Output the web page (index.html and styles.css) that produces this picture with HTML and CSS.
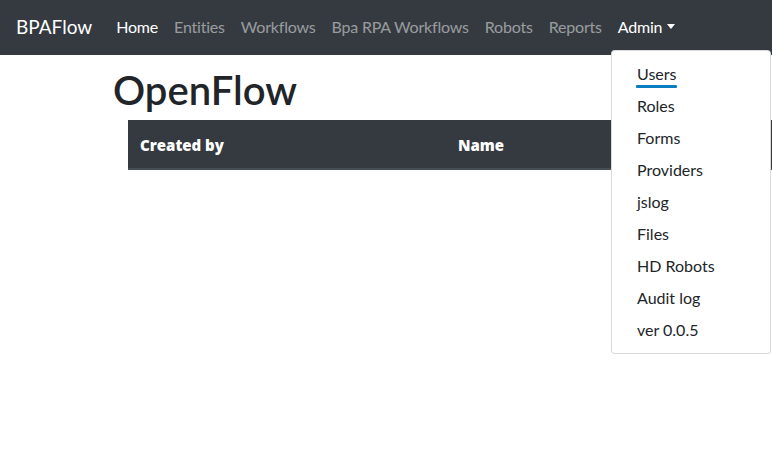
FILE: index.html
```html
<!DOCTYPE html>
<html>
<head>
<meta charset="utf-8">
<link rel="stylesheet" href="styles.css">
</head>
<body>
<nav class="navbar">
  <a class="brand">BPAFlow</a>
  <ul class="nav">
    <li><a class="nav-link active">Home</a></li>
    <li><a class="nav-link">Entities</a></li>
    <li><a class="nav-link">Workflows</a></li>
    <li><a class="nav-link">Bpa RPA Workflows</a></li>
    <li><a class="nav-link">Robots</a></li>
    <li><a class="nav-link">Reports</a></li>
    <li><a class="nav-link active dropdown-toggle">Admin</a></li>
  </ul>
</nav>
<div class="dropdown-menu">
  <a class="dropdown-item"><span class="focused">Users</span></a>
  <a class="dropdown-item">Roles</a>
  <a class="dropdown-item">Forms</a>
  <a class="dropdown-item">Providers</a>
  <a class="dropdown-item">jslog</a>
  <a class="dropdown-item">Files</a>
  <a class="dropdown-item">HD Robots</a>
  <a class="dropdown-item">Audit log</a>
  <a class="dropdown-item">ver 0.0.5</a>
</div>
<main class="content">
  <h1 class="title">OpenFlow</h1>
  <table class="table">
    <thead>
      <tr><th class="col-created">Created by</th><th>Name</th></tr>
    </thead>
  </table>
</main>
</body>
</html>
```
FILE: styles.css
```css
html, body {
  margin: 0;
  padding: 0;
  overflow: hidden;
  height: 100%;
}
body {
  font-family: Lato, "Open Sans", sans-serif;
  font-size: 16px;
  line-height: 24px;
  color: #212529;
  background: #fff;
  position: relative;
}
.navbar {
  height: 55px;
  box-sizing: border-box;
  background: #343a40;
  display: flex;
  align-items: center;
  padding: 0 16px 2px 16px;
}
.brand {
  color: #fff;
  font-size: 19px;
  line-height: 30px;
  margin-right: 16px;
}
.nav {
  display: flex;
  list-style: none;
  margin: 0;
  padding: 0;
}
.nav-link {
  display: block;
  padding: 8px;
  color: rgba(255,255,255,.5);
  letter-spacing: -0.2px;
}
.nav-link.active {
  color: #fff;
}
.dropdown-toggle::after {
  content: "";
  display: inline-block;
  margin-left: 5px;
  vertical-align: 4px;
  border-top: 5px solid;
  border-left: 4.5px solid transparent;
  border-right: 4.5px solid transparent;
}
.dropdown-menu {
  position: absolute;
  left: 611px;
  top: 50px;
  width: 160px;
  box-sizing: border-box;
  padding: 7px 0 7px 0;
  background: #fff;
  border: 1px solid rgba(0,0,0,.15);
  border-radius: 4px;
  z-index: 10;
}
.dropdown-item {
  display: block;
  padding: 4px 24px 4px 25px;
  color: #212529;
  white-space: nowrap;
}
.focused {
  position: relative;
}
.focused::after {
  content: "";
  position: absolute;
  left: -1px;
  right: -1px;
  bottom: -5px;
  height: 3px;
  background: #0a7cc1;
  border-radius: 1px;
}
.content {
  padding: 15px 0 0 113px;
}
.title {
  margin: 0 0 10px 0;
  font-size: 40px;
  line-height: 40px;
  font-weight: 600;
}
.table {
  margin-left: 15px;
  width: 700px;
  border-collapse: collapse;
}
.table th {
  background: #343a40;
  color: #fff;
  text-align: left;
  font-family: "Open Sans", Lato, sans-serif;
  font-size: 15px;
  font-weight: 800;
  padding: 13px 12px 11px 12px;
  border-bottom: 2px solid #454d55;
}
.col-created {
  width: 294px;
}
```
